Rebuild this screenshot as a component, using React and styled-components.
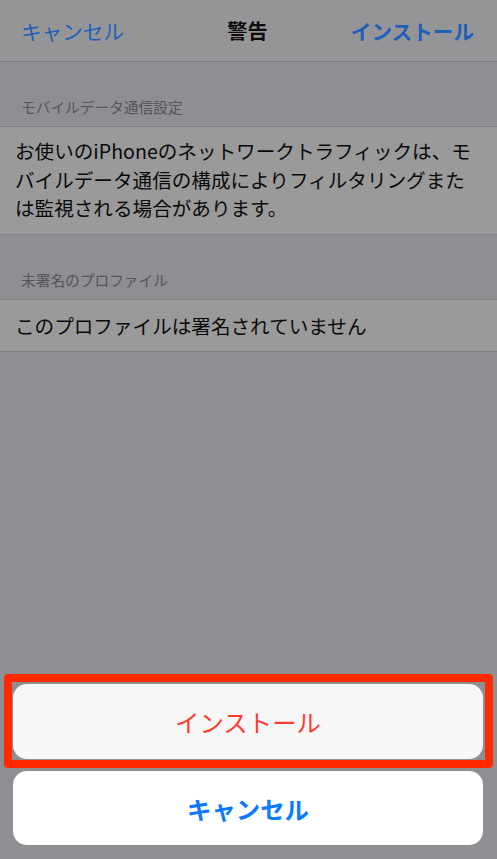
import React from "react";
import styled, { createGlobalStyle } from "styled-components";

const Global = createGlobalStyle`
  html, body { margin: 0; padding: 0; background: #8e8e93; }
  body { font-family: "Noto Sans CJK JP", "Noto Sans", sans-serif; -webkit-font-smoothing: antialiased; }
  #root { min-height: 100vh; }
`;

const Page = styled.div`
  display: flex;
  flex-direction: column;
  min-height: 100vh;
  background: #8e8e93;
  overflow: hidden;
`;

const NavBar = styled.header`
  height: 62px;
  box-sizing: border-box;
  padding: 2px 23px 0 21px;
  display: grid;
  grid-template-columns: 1fr auto 1fr;
  align-items: center;
  background: #959597;
  border-bottom: 1px solid #7d7d81;
`;

const NavButton = styled.span`
  font-size: 20.6px;
  line-height: 1;
  color: #1e5fb8;
  font-weight: ${(p) => (p.$bold ? 700 : 400)};
  justify-self: ${(p) => (p.$right ? "end" : "start")};
`;

const NavTitle = styled.span`
  font-size: 20.2px;
  line-height: 1;
  font-weight: 700;
  color: #0b0b0c;
`;

const SectionHeader = styled.div`
  height: 65px;
  box-sizing: border-box;
  display: flex;
  align-items: flex-end;
  padding: 0 22px 7px 21px;
  font-size: 14.7px;
  line-height: 24px;
  color: #55555a;
  border-bottom: 1px solid #7f7f83;
`;

const Cell = styled.div`
  background: #9a9a9b;
  padding: ${(p) => p.$pad || "0 15px"};
  font-size: 19.6px;
  line-height: ${(p) => p.$lh || "28.5px"};
  color: #0a0a0a;
  border-bottom: 1px solid #828286;
  white-space: nowrap;
`;

const Spacer = styled.div`
  flex: 1;
`;

const Sheet = styled.div`
  display: flex;
  flex-direction: column;
  gap: 12px;
  padding: 0 14px 14px 13px;
`;

const ActionWrap = styled.div`
  position: relative;
`;

const Highlight = styled.div`
  position: absolute;
  top: -10px;
  left: -9px;
  right: -10px;
  bottom: -9px;
  border: 8px solid #ff2a00;
  border-radius: 4px;
  pointer-events: none;
`;

const ActionButton = styled.button`
  display: flex;
  align-items: center;
  justify-content: center;
  width: 100%;
  height: ${(p) => p.$h || "75px"};
  border: none;
  border-radius: 14px;
  background: ${(p) => (p.$cancel ? "#ffffff" : "#f7f7f7")};
  color: ${(p) => (p.$cancel ? "#0a7bff" : "#ff3b30")};
  font-family: "Noto Sans CJK JP", "Noto Sans", sans-serif;
  font-size: 24.4px;
  font-weight: ${(p) => (p.$cancel ? 700 : 400)};
  padding: 0;
`;

export default function App() {
  return (
    <Page>
      <Global />
      <NavBar>
        <NavButton>キャンセル</NavButton>
        <NavTitle>警告</NavTitle>
        <NavButton $bold $right>インストール</NavButton>
      </NavBar>
      <SectionHeader>モバイルデータ通信設定</SectionHeader>
      <Cell $pad="10px 15px 11px">
        お使いのiPhoneのネットワークトラフィックは、モ
        <br />
        バイルデータ通信の構成によりフィルタリングまた
        <br />
        は監視される場合があります。
      </Cell>
      <SectionHeader>未署名のプロファイル</SectionHeader>
      <Cell $pad="0 15px" $lh="51px">このプロファイルは署名されていません</Cell>
      <Spacer />
      <Sheet>
        <ActionWrap>
          <ActionButton>インストール</ActionButton>
          <Highlight />
        </ActionWrap>
        <ActionButton $cancel $h="74px">キャンセル</ActionButton>
      </Sheet>
    </Page>
  );
}
